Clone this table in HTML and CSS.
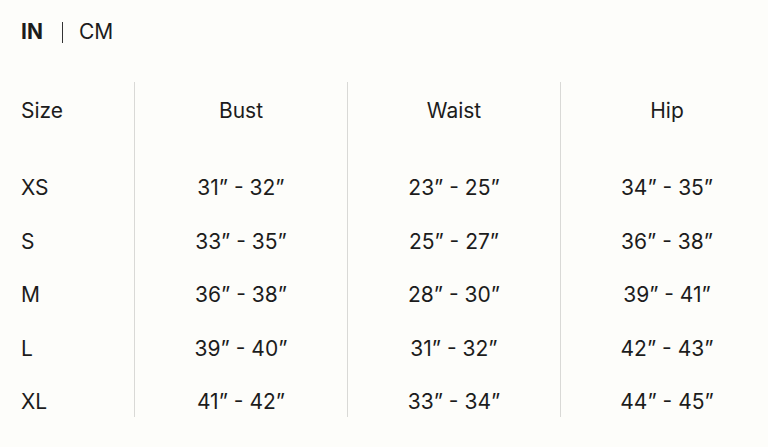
FILE: index.html
```html
<!DOCTYPE html>
<html lang="en">
<head>
<meta charset="utf-8">
<title>Size chart</title>
<link rel="stylesheet" href="styles.css">
</head>
<body>
<div class="page">
  <div class="units">
    <span class="unit unit-active">IN</span>
    <span class="unit-sep"></span>
    <span class="unit">CM</span>
  </div>
  <div class="chart">
    <div class="col col-size">
      <div class="head">Size</div>
      <div class="cells">
        <div>XS</div><div>S</div><div>M</div><div>L</div><div>XL</div>
      </div>
    </div>
    <div class="col">
      <div class="head">Bust</div>
      <div class="cells">
        <div>31” - 32”</div><div>33” - 35”</div><div>36” - 38”</div><div>39” - 40”</div><div>41” - 42”</div>
      </div>
    </div>
    <div class="col">
      <div class="head">Waist</div>
      <div class="cells">
        <div>23” - 25”</div><div>25” - 27”</div><div>28” - 30”</div><div>31” - 32”</div><div>33” - 34”</div>
      </div>
    </div>
    <div class="col">
      <div class="head">Hip</div>
      <div class="cells">
        <div>34” - 35”</div><div>36” - 38”</div><div>39” - 41”</div><div>42” - 43”</div><div>44” - 45”</div>
      </div>
    </div>
  </div>
</div>
</body>
</html>
```
FILE: styles.css
```css
html, body {
  margin: 0;
  padding: 0;
  background: #fdfdfa;
  overflow: hidden;
}
body {
  font-family: Inter, "Open Sans", sans-serif;
  font-size: 21px;
  color: #1c1c1c;
}
.page {
  width: 773px;
  padding-top: 17px;
}
.units {
  display: flex;
  align-items: center;
  height: 30px;
  padding-left: 21px;
}
.unit {
  line-height: 30px;
}
.unit-active {
  font-weight: 700;
}
.unit-sep {
  width: 1px;
  height: 21px;
  background: #333;
  margin: 0 16px 0 19px;
}
.chart {
  display: grid;
  grid-template-columns: 134px 213px 213px 213px;
  margin-top: 35px;
}
.col {
  display: flex;
  flex-direction: column;
  align-items: center;
  border-left: 1px solid #d9d9d6;
  padding-top: 14px;
  padding-bottom: 0;
}
.col-size {
  border-left: none;
  align-items: flex-start;
  padding-left: 21px;
}
.head {
  line-height: 30px;
}
.cells {
  display: flex;
  flex-direction: column;
  align-items: inherit;
  gap: 23.5px;
  margin-top: 47px;
  line-height: 30px;
}
```
